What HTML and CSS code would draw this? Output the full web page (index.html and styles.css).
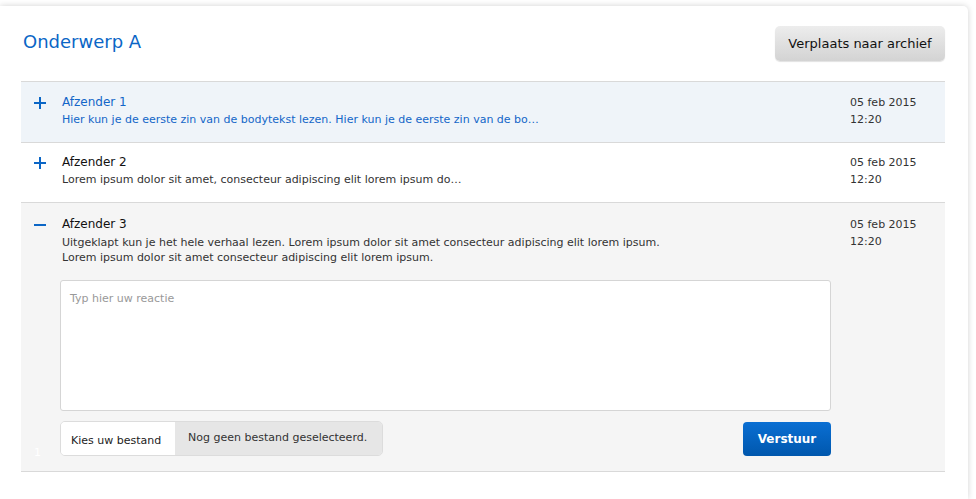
FILE: index.html
```html
<!DOCTYPE html>
<html lang="nl">
<head>
<meta charset="utf-8">
<title>Onderwerp A</title>
<link rel="stylesheet" href="styles.css">
</head>
<body>
<div class="card">
  <header class="head">
    <h1 class="title">Onderwerp A</h1>
    <button class="btn-archive" type="button">Verplaats naar archief</button>
  </header>
  <ul class="list">
    <li class="row row-active">
      <span class="toggle"><svg width="12" height="12" viewBox="0 0 12 12"><path d="M0 6H12M6 0V12" stroke="currentColor" stroke-width="2"/></svg></span>
      <div class="body">
        <div class="name">Afzender 1</div>
        <div class="preview">Hier kun je de eerste zin van de bodytekst lezen. Hier kun je de eerste zin van de bo…</div>
      </div>
      <div class="date">05 feb 2015<br>12:20</div>
    </li>
    <li class="row">
      <span class="toggle"><svg width="12" height="12" viewBox="0 0 12 12"><path d="M0 6H12M6 0V12" stroke="currentColor" stroke-width="2"/></svg></span>
      <div class="body">
        <div class="name">Afzender 2</div>
        <div class="preview">Lorem ipsum dolor sit amet, consecteur adipiscing elit lorem ipsum do…</div>
      </div>
      <div class="date">05 feb 2015<br>12:20</div>
    </li>
    <li class="row row-open">
      <div class="toggle-col">
        <span class="toggle"><svg width="12" height="12" viewBox="0 0 12 12"><path d="M0 6H12" stroke="currentColor" stroke-width="2"/></svg></span>
        <span class="counter">1</span>
      </div>
      <div class="body">
        <div class="name">Afzender 3</div>
        <div class="full">Uitgeklapt kun je het hele verhaal lezen. Lorem ipsum dolor sit amet consecteur adipiscing elit lorem ipsum.<br>Lorem ipsum dolor sit amet consecteur adipiscing elit lorem ipsum.</div>
        <form class="reply">
          <textarea class="reply-text" placeholder="Typ hier uw reactie"></textarea>
          <div class="reply-actions">
            <div class="file">
              <span class="file-btn">Kies uw bestand</span>
              <span class="file-name">Nog geen bestand geselecteerd.</span>
            </div>
            <button class="btn-send" type="button">Verstuur</button>
          </div>
        </form>
      </div>
      <div class="date">05 feb 2015<br>12:20</div>
    </li>
  </ul>
</div>
</body>
</html>
```
FILE: styles.css
```css
* { box-sizing: border-box; }
html, body { margin: 0; padding: 0; background: #fff; }
body {
  font-family: "DejaVu Sans", Verdana, sans-serif;
  color: #222;
  overflow: hidden;
  height: 499px;
}
.card {
  margin-top: 6px;
  width: 968px;
  height: 493px;
  background: #fff;
  border-radius: 0 5px 0 0;
  box-shadow: 0 0 6px rgba(0,0,0,0.18);
  padding: 0 23px 0 21px;
}
.head {
  display: flex;
  align-items: center;
  justify-content: space-between;
  padding: 20px 0 20px 2px;
}
.title {
  margin: 0 0 4px;
  font-size: 18px;
  font-weight: normal;
  color: #0b66c6;
  line-height: 22px;
}
.btn-archive {
  font-family: inherit;
  font-size: 13px;
  color: #111;
  height: 35px;
  width: 170px;
  border: none;
  border-radius: 5px;
  background: linear-gradient(#ededed, #d3d3d3);
  box-shadow: 0 1px 1px rgba(0,0,0,0.12);
  padding: 0;
}
.list {
  list-style: none;
  margin: 0;
  padding: 0;
  border-top: 1px solid #d9d9d9;
}
.row {
  display: grid;
  grid-template-columns: 26px 1fr 95px;
  border-bottom: 1px solid #d9d9d9;
  padding: 11px 0 14px 13px;
}
.row-active { background: #eff4f9; padding-top: 12px; padding-bottom: 14px; }
.row-open { background: #f5f5f5; padding-top: 13px; padding-bottom: 15px; }
.toggle {
  display: block;
  color: #0b66c6;
  height: 12px;
  margin-top: 3px;
  line-height: 0;
}
.toggle-col { display: flex; flex-direction: column; justify-content: space-between; }
.counter {
  color: #fff;
  font-size: 11px;
  line-height: 14px;
  margin-bottom: -4px;
}
.body { padding-right: 19px; min-width: 0; }
.name {
  font-size: 12px;
  line-height: 17px;
  color: #111;
  padding-left: 2px;
}
.preview {
  font-size: 11px;
  line-height: 17px;
  color: #333;
  padding-left: 2px;
  white-space: nowrap;
}
.row-active .name, .row-active .preview { color: #1366c8; }
.full {
  font-size: 11px;
  line-height: 15px;
  color: #333;
  padding-left: 2px;
  margin-top: 2px;
}
.date {
  font-size: 11px;
  line-height: 17px;
  color: #333;
}
.reply { margin: 15px 0 0; }
.reply-text {
  display: block;
  width: 771px;
  height: 131px;
  resize: none;
  border: 1px solid #d5d5d5;
  border-radius: 3px;
  background: #fff;
  font-family: inherit;
  font-size: 11px;
  padding: 11px 9px;
  color: #333;
}
.reply-text::placeholder { color: #999; }
.reply-actions {
  display: flex;
  justify-content: space-between;
  align-items: center;
  margin-top: 10px;
}
.file {
  display: flex;
  height: 35px;
  width: 323px;
  border: 1px solid #dcdcdc;
  border-radius: 5px;
  overflow: hidden;
  font-size: 11px;
  color: #222;
}
.file-btn {
  background: #fff;
  width: 114px;
  display: flex;
  align-items: center;
  padding: 3px 0 0 10px;
}
.file-name {
  flex: 1;
  background: #e6e6e6;
  display: flex;
  align-items: center;
  padding: 0 0 2px 13px;
  color: #333;
}
.btn-send {
  font-family: inherit;
  font-size: 12px;
  font-weight: bold;
  color: #fff;
  width: 88px;
  height: 34px;
  border: none;
  border-radius: 4px;
  background: linear-gradient(#0a6fd3, #0057ad);
  padding: 0;
}
```
